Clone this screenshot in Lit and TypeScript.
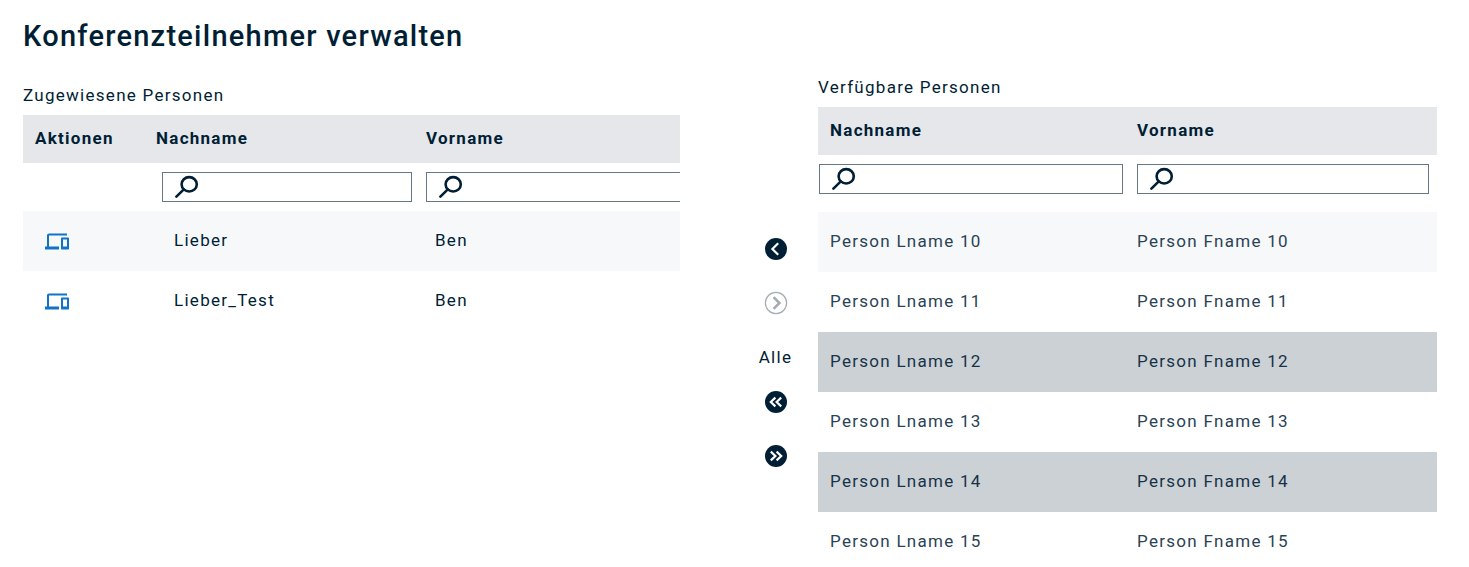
import { LitElement, html, css, svg } from "lit";
import { customElement, property, state } from "lit/decorators.js";
import { classMap } from "lit/directives/class-map.js";

interface Person {
  lastName: string;
  firstName: string;
  selected?: boolean;
}

@customElement("search-field")
class SearchField extends LitElement {
  @property() label = "";

  static styles = css`
    :host {
      display: block;
    }
    .field {
      display: flex;
      align-items: center;
      box-sizing: border-box;
      height: 30px;
      padding-left: 12px;
      border: 1px solid #667786;
      background: #fff;
    }
    .icon {
      flex: none;
      width: 24px;
      height: 24px;
    }
    .input {
      flex: 1;
      min-width: 0;
      height: 28px;
      padding: 0 8px;
      border: 0;
      outline: 0;
      background: transparent;
      color: #001e34;
      font: 17px Roboto, sans-serif;
    }
  `;

  render() {
    return html`
      <label class="field">
        <svg class="icon" viewBox="0 0 24 24" fill="none" stroke="#001e34" aria-hidden="true">
          <ellipse cx="14.2" cy="9.3" rx="7.6" ry="7.2" stroke-width="2.6" />
          <path d="M8.8 14.4 1.4 21.6" stroke-width="2.6" stroke-linecap="round" />
        </svg>
        <input class="input" type="text" aria-label=${this.label} />
      </label>
    `;
  }
}

@customElement("transfer-button")
class TransferButton extends LitElement {
  @property() label = "";
  @property({ type: Boolean }) forward = false;
  @property({ type: Boolean }) double = false;
  @property({ type: Boolean }) disabled = false;

  static styles = css`
    :host {
      display: block;
      height: 24px;
    }
    .button {
      display: block;
      width: 24px;
      height: 24px;
      padding: 0;
      border: 0;
      background: none;
      cursor: pointer;
    }
    .button:disabled {
      cursor: default;
    }
    .icon {
      display: block;
    }
  `;

  render() {
    const single = this.forward ? "M9.6 6.2 15.4 12 9.6 17.8" : "M14.2 6.2 8.4 12 14.2 17.8";
    const pair = this.forward
      ? "M6.8 7.6 11.4 12 6.8 16.4M12.6 7.6 17.2 12 12.6 16.4"
      : "M11.4 7.6 6.8 12 11.4 16.4M17.2 7.6 12.6 12 17.2 16.4";
    const arrow = this.double ? pair : single;
    return html`
      <button class="button" type="button" aria-label=${this.label} ?disabled=${this.disabled}>
        <svg class="icon" width="24" height="24" viewBox="0 0 24 24">
          ${this.disabled
            ? svg`<circle cx="12" cy="12" r="10.6" fill="#fff" stroke="#a3acb5" stroke-width="1.2" />
                <path d=${arrow} fill="none" stroke="#a3acb5" stroke-width="2.6" />`
            : svg`<circle cx="12" cy="12" r="11" fill="#001e34" />
                <path d=${arrow} fill="none" stroke="#fff" stroke-width="2.2" />`}
        </svg>
      </button>
    `;
  }
}

@customElement("app-root")
class AppRoot extends LitElement {
  @state() private assigned: Person[] = [
    { lastName: "Lieber", firstName: "Ben" },
    { lastName: "Lieber_Test", firstName: "Ben" },
  ];

  @state() private available: Person[] = [10, 11, 12, 13, 14, 15].map((n) => ({
    lastName: `Person Lname ${n}`,
    firstName: `Person Fname ${n}`,
    selected: n === 12 || n === 14,
  }));

  static styles = css`
    :host {
      display: block;
      box-sizing: border-box;
      height: 100vh;
      overflow: auto;
      scrollbar-width: none;
      padding: 18px 32px 0 23px;
      background: #fff;
      color: #001e34;
      font: 17px/24px Roboto, sans-serif;
      letter-spacing: 0.075em;
    }
    .title {
      margin: 0 0 21px;
      font-size: 29px;
      line-height: 36px;
      font-weight: 500;
      letter-spacing: 0.043em;
    }
    .columns {
      display: grid;
      grid-template-columns: 657fr 138px 619fr;
      align-items: start;
    }
    .panel {
      min-width: 0;
      overflow: hidden;
    }
    .panel.assigned {
      padding-top: 8px;
    }
    .heading {
      margin: 0 0 8px;
      font-size: 17px;
      line-height: 24px;
      font-weight: 400;
    }
    .table {
      width: 100%;
      border-collapse: collapse;
      table-layout: fixed;
    }
    .assigned .table {
      width: calc(100% + 24px);
    }
    .col-actions {
      width: 121px;
    }
    .col-last {
      width: 270px;
    }
    .col-half {
      width: 307px;
    }
    th,
    td {
      padding: 0 12px;
      text-align: left;
    }
    .head th {
      height: 48px;
      padding-bottom: 2px;
      box-sizing: border-box;
      background: #e6e7eb;
      font-weight: 700;
    }
    .filters td {
      box-sizing: border-box;
      height: 48px;
      padding: 9px 8px 9px 12px;
      vertical-align: top;
    }
    .assigned .filters .last {
      padding-left: 18px;
      padding-right: 2px;
    }
    .available .filters td {
      height: 57px;
    }
    .available .filters .last {
      padding-left: 1px;
      padding-right: 2px;
    }
    .row td {
      box-sizing: border-box;
      height: 60px;
      padding-bottom: 2px;
    }
    .row:nth-child(odd) {
      background: #f7f8fa;
    }
    .available .row td {
      color: #2b4355;
    }
    .available .row.selected {
      background: #ccd1d6;
    }
    .available .row.selected td {
      color: #173347;
    }
    .row .actions {
      padding-left: 22px;
      padding-bottom: 0;
    }
    .assigned .row .last {
      padding-left: 30px;
    }
    .assigned .row .first {
      padding-left: 21px;
    }
    .device {
      display: block;
      width: 24px;
      height: 24px;
      padding: 0;
      border: 0;
      background: none;
      cursor: pointer;
    }
    .device svg {
      display: block;
      fill: #1272c6;
    }
    .controls {
      display: flex;
      flex-direction: column;
      align-items: center;
      padding: 162px 0 0 53px;
    }
    .all {
      margin: 30px 0 21px;
      line-height: 24px;
    }
    .group {
      display: grid;
      gap: 30px;
    }
  `;

  render() {
    return html`
      <h1 class="title">Konferenzteilnehmer verwalten</h1>
      <main class="columns">
        <section class="panel assigned">
          <h2 class="heading" id="assigned">Zugewiesene Personen</h2>
          <table class="table" aria-labelledby="assigned">
            <colgroup>
              <col class="col-actions" />
              <col class="col-last" />
              <col />
            </colgroup>
            <thead>
              <tr class="head">
                <th scope="col">Aktionen</th>
                <th scope="col">Nachname</th>
                <th scope="col">Vorname</th>
              </tr>
              <tr class="filters">
                <td></td>
                <td class="last"><search-field label="Nachname"></search-field></td>
                <td><search-field label="Vorname"></search-field></td>
              </tr>
            </thead>
            <tbody>
              ${this.assigned.map(
                (p) => html`
                  <tr class="row">
                    <td class="actions">
                      <button class="device" type="button" aria-label="Geräte">
                        <svg width="24" height="24" viewBox="0 0 24 24">
                          <path
                            transform="translate(0 .5)"
                            d="M4 6h18V4H4c-1.1 0-2 .9-2 2v11H0v3h14v-3H4V6zm19 2h-6c-.55 0-1 .45-1 1v10c0 .55.45 1 1 1h6c.55 0 1-.45 1-1V9c0-.55-.45-1-1-1zm-1 9h-4v-7h4v7z"
                          />
                        </svg>
                      </button>
                    </td>
                    <td class="last">${p.lastName}</td>
                    <td class="first">${p.firstName}</td>
                  </tr>
                `
              )}
            </tbody>
          </table>
        </section>

        <div class="controls">
          <div class="group">
            <transfer-button label="Zuweisen"></transfer-button>
            <transfer-button label="Entfernen" forward disabled></transfer-button>
          </div>
          <span class="all">Alle</span>
          <div class="group">
            <transfer-button label="Alle zuweisen" double></transfer-button>
            <transfer-button label="Alle entfernen" double forward></transfer-button>
          </div>
        </div>

        <section class="panel available">
          <h2 class="heading" id="available">Verfügbare Personen</h2>
          <table class="table" aria-labelledby="available">
            <colgroup>
              <col class="col-half" />
              <col />
            </colgroup>
            <thead>
              <tr class="head">
                <th scope="col">Nachname</th>
                <th scope="col">Vorname</th>
              </tr>
              <tr class="filters">
                <td class="last"><search-field label="Nachname"></search-field></td>
                <td><search-field label="Vorname"></search-field></td>
              </tr>
            </thead>
            <tbody>
              ${this.available.map(
                (p) => html`
                  <tr class=${classMap({ row: true, selected: !!p.selected })}>
                    <td>${p.lastName}</td>
                    <td>${p.firstName}</td>
                  </tr>
                `
              )}
            </tbody>
          </table>
        </section>
      </main>
    `;
  }
}
